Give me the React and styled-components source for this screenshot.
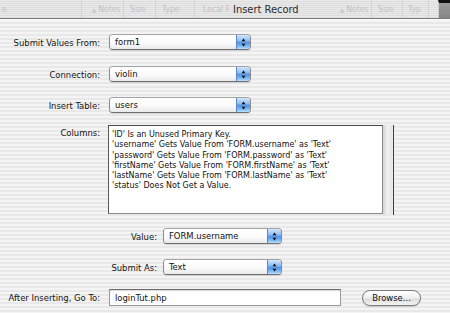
import React from 'react';
import styled, { createGlobalStyle } from 'styled-components';

const GlobalStyle = createGlobalStyle`
  html, body {
    margin: 0;
    padding: 0;
  }
  body {
    width: 450px;
    height: 313px;
    overflow: hidden;
    font-family: "DejaVu Sans Condensed", "DejaVu Sans", sans-serif;
    color: #111;
  }
`;

const Window = styled.div`
  width: 450px;
  height: 313px;
  overflow: hidden;
  display: flex;
  flex-direction: column;
  background: repeating-linear-gradient(
    to bottom,
    #f4f4f4 0,
    #f4f4f4 2px,
    #e8e8e8 2px,
    #e8e8e8 4px
  );
`;

const TitleBar = styled.div`
  position: relative;
  flex: none;
  height: 18px;
  display: flex;
  align-items: center;
  background: repeating-linear-gradient(
    to bottom,
    #e9e9e9 0,
    #e9e9e9 1px,
    #dedede 1px,
    #dedede 2px
  );
  border-bottom: 1px solid #7a7a7a;
  box-shadow: 0 1px 0 #fafafa;
`;

const GhostCell = styled.div`
  flex: none;
  width: ${({ w }) => w}px;
  height: 100%;
  padding-left: ${({ pad }) => pad || 0}px;
  box-sizing: border-box;
  display: flex;
  align-items: center;
  justify-content: ${({ end }) => (end ? 'flex-end' : 'flex-start')};
  font-size: 8.6px;
  color: #c2c2c2;
  border-right: ${({ sep }) => (sep ? '1px solid #d4d4d4' : 'none')};
  white-space: nowrap;
  overflow: hidden;
`;

const SortArrow = styled.span`
  font-size: 6px;
  color: #c8c8c8;
  margin-right: 2px;
`;

const CornerBlock = styled.div`
  flex: 1;
  align-self: stretch;
  background: linear-gradient(to bottom, #9a9a9a, #858585);
  border-top: 3px solid #111;
  border-left: 1px solid #cfcfcf;
`;

const Title = styled.div`
  position: absolute;
  left: 233px;
  top: 3px;
  font-size: 11px;
  line-height: 13px;
  color: #2a2a2a;
`;

const Form = styled.div`
  display: flex;
  flex-direction: column;
  padding-top: 15px;
`;

const Row = styled.div`
  display: flex;
  align-items: ${({ top }) => (top ? 'flex-start' : 'center')};
  margin-top: ${({ space }) => space || 0}px;
  height: ${({ h }) => h || 16}px;
`;

const Label = styled.div`
  flex: none;
  width: ${({ w }) => w}px;
  margin-right: ${({ gap }) => gap || 9}px;
  text-align: right;
  font-size: 9.4px;
  line-height: 11px;
  padding-top: ${({ top }) => top || 0}px;
  white-space: nowrap;
  color: #151515;
`;

const PopUp = styled.div`
  flex: none;
  width: ${({ w }) => w}px;
  height: 16px;
  box-sizing: border-box;
  display: flex;
  border: 1px solid #8c8c8c;
  border-top-color: #a3a3a3;
  border-bottom-color: #6f6f6f;
  border-radius: 4px;
  overflow: hidden;
  box-shadow: 0 1px 1px rgba(0, 0, 0, 0.12);
`;

const PopUpBody = styled.div`
  flex: 1;
  padding-left: 5px;
  font-size: 9.4px;
  line-height: 14px;
  background: linear-gradient(to bottom, #ffffff 0%, #fbfbfb 55%, #e9e9e9 100%);
`;

const PopUpCap = styled.div`
  flex: none;
  width: 13px;
  display: flex;
  align-items: center;
  justify-content: center;
  border-left: 1px solid #5d87c4;
  background: linear-gradient(
    to bottom,
    #d3e8fd 0%,
    #8fbcf0 40%,
    #4f93e6 55%,
    #86c0f7 85%,
    #c4e2ff 100%
  );
`;

const ColumnsBox = styled.div`
  flex: none;
  width: 275px;
  height: 89px;
  box-sizing: border-box;
  background: #fff;
  border: 1px solid #8a8a8a;
  border-top-color: #4a4a4a;
  border-left-color: #5a5a5a;
  padding: 3px 3px;
  font-size: 8.9px;
  line-height: 10.3px;
  white-space: nowrap;
`;

const ScrollTrack = styled.div`
  flex: none;
  width: 10px;
  height: 90px;
  background: linear-gradient(to right, #d4d4d4, #f2f2f2 45%, #e6e6e6 80%, #f0f0f0);
  border-right: 1px solid #3a3a3a;
`;

const Field = styled.div`
  flex: none;
  width: 232px;
  height: 17px;
  box-sizing: border-box;
  background: #fff;
  border: 1px solid #9a9a9a;
  border-top-color: #6c6c6c;
  box-shadow: inset 0 1px 1px rgba(0, 0, 0, 0.15);
  padding-left: 5px;
  font-size: 9.4px;
  line-height: 15px;
`;

const Button = styled.div`
  flex: none;
  margin-left: 21px;
  width: 59px;
  height: 16px;
  box-sizing: border-box;
  border: 1px solid #7a7a7a;
  border-radius: 8px;
  background: linear-gradient(to bottom, #ffffff 0%, #f1f1f1 45%, #dedede 60%, #f4f4f4 100%);
  box-shadow: 0 1px 1px rgba(0, 0, 0, 0.15);
  font-size: 9.4px;
  line-height: 14px;
  text-align: center;
`;

const Arrows = () => (
  <svg width="5" height="9" viewBox="0 0 5 9">
    <path d="M2.5 0.5 L4.5 3.2 L0.5 3.2 Z" fill="#111" />
    <path d="M2.5 8.5 L4.5 5.8 L0.5 5.8 Z" fill="#111" />
  </svg>
);

const Select = ({ w, value }) => (
  <PopUp w={w}>
    <PopUpBody>{value}</PopUpBody>
    <PopUpCap>
      <Arrows />
    </PopUpCap>
  </PopUp>
);

const columnLines = [
  "'ID' Is an Unused Primary Key.",
  "'username' Gets Value From 'FORM.username' as 'Text'",
  "'password' Gets Value From 'FORM.password' as 'Text'",
  "'firstName' Gets Value From 'FORM.firstName' as 'Text'",
  "'lastName' Gets Value From 'FORM.lastName' as 'Text'",
  "'status' Does Not Get a Value.",
];

const App = () => {
  return (
    <>
      <GlobalStyle />
      <Window>
        <TitleBar>
          <GhostCell w={82} pad={2} sep>e</GhostCell>
          <GhostCell w={42} end sep>
            <SortArrow>▲</SortArrow>Notes&nbsp;
          </GhostCell>
          <GhostCell w={32} pad={6} sep>Size</GhostCell>
          <GhostCell w={39} pad={6} sep>Type</GhostCell>
          <GhostCell w={128} pad={8}>Local F</GhostCell>
          <GhostCell w={49} end sep>
            <SortArrow>▲</SortArrow>Notes&nbsp;
          </GhostCell>
          <GhostCell w={31} pad={6} sep>Size</GhostCell>
          <GhostCell w={26} pad={5} sep>Typ</GhostCell>
          <GhostCell w={9} />
          <CornerBlock />
          <Title>Insert Record</Title>
        </TitleBar>

        <Form>
          <Row>
            <Label w={100}>Submit Values From:</Label>
            <Select w={142} value="form1" />
          </Row>
          <Row space={16}>
            <Label w={100}>Connection:</Label>
            <Select w={142} value="violin" />
          </Row>
          <Row space={15}>
            <Label w={100}>Insert Table:</Label>
            <Select w={142} value="users" />
          </Row>
          <Row space={12} h={90} top>
            <Label w={100} gap={8} top={2}>Columns:</Label>
            <ColumnsBox>
              {columnLines.map((line, i) => (
                <div key={i}>{line}</div>
              ))}
            </ColumnsBox>
            <ScrollTrack />
          </Row>
          <Row space={13}>
            <Label w={157} gap={6}>Value:</Label>
            <Select w={119} value="FORM.username" />
          </Row>
          <Row space={15}>
            <Label w={157} gap={6}>Submit As:</Label>
            <Select w={119} value="Text" />
          </Row>
          <Row space={14} h={17}>
            <Label w={100}>After Inserting, Go To:</Label>
            <Field>loginTut.php</Field>
            <Button>Browse...</Button>
          </Row>
        </Form>
      </Window>
    </>
  );
};

export default App;
